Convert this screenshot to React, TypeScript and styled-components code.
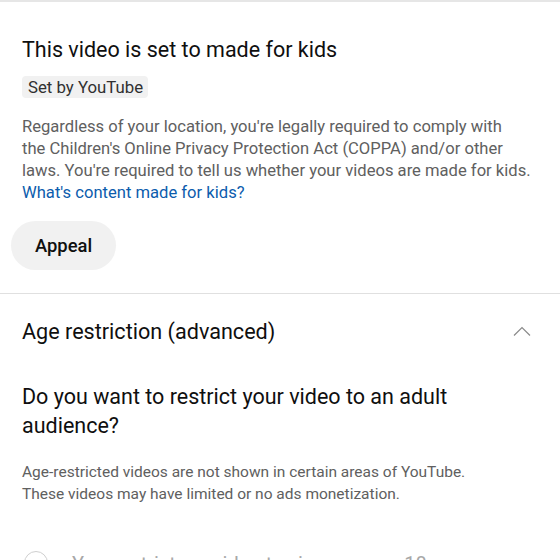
import styled, { createGlobalStyle } from 'styled-components';

const GlobalStyle = createGlobalStyle`
  html, body {
    margin: 0;
    padding: 0;
    background: #fff;
  }
  body {
    font-family: Roboto, "Noto Sans", Arial, sans-serif;
    color: #0f0f0f;
    overflow: hidden;
  }
`;

const Page = styled.div`
  width: 560px;
  height: 560px;
  overflow: hidden;
  border-top: 2px solid #e6e6e6;
  box-sizing: border-box;
`;

const Section = styled.section`
  padding: 34px 22px 23px;
  border-bottom: 1px solid #e0e0e0;
`;

const Title = styled.h2`
  margin: 0;
  font-size: 21.5px;
  font-weight: 400;
  line-height: 28px;
  color: #0f0f0f;
`;

const Chip = styled.span`
  display: inline-block;
  margin-top: 12px;
  padding: 0 5px 0 6px;
  height: 22px;
  line-height: 22px;
  font-size: 16.8px;
  color: #303030;
  background: #f1f1f1;
  border-radius: 4px;
`;

const Body = styled.p`
  margin: 18px 0 0;
  font-size: 16.6px;
  line-height: 22px;
  color: #606060;
  white-space: nowrap;
`;

const Link = styled.a`
  color: #0b5cad;
  text-decoration: none;
`;

const PillButton = styled.button`
  display: block;
  margin: 17px 0 0 -11px;
  height: 49px;
  padding: 0 24px;
  border: none;
  border-radius: 25px;
  background: #f1f1f1;
  font-family: inherit;
  font-size: 18.4px;
  font-weight: 500;
  color: #0f0f0f;
`;

const AccordionHeader = styled.div`
  display: flex;
  align-items: center;
  justify-content: space-between;
  padding: 23px 22px 0;
  height: 28px;
`;

const HeaderTitle = styled.h3`
  margin: 0;
  font-size: 21.6px;
  font-weight: 400;
  color: #0f0f0f;
`;

const Chevron = styled.svg`
  width: 18px;
  height: 10px;
  margin-right: 7px;
`;

const Content = styled.div`
  padding: 37px 22px 0;
`;

const Question = styled.h4`
  margin: 0;
  font-size: 21.5px;
  font-weight: 400;
  line-height: 29px;
  color: #0f0f0f;
`;

const Note = styled.p`
  margin: 21px 0 0;
  font-size: 15.5px;
  line-height: 22px;
  color: #606060;
`;

const RadioRow = styled.label`
  display: flex;
  align-items: flex-start;
  gap: 24px;
  margin-top: 46px;
  margin-left: 2px;
`;

const Radio = styled.span`
  width: 22px;
  height: 22px;
  border-radius: 50%;
  border: 1.5px solid #cfcfcf;
  flex-shrink: 0;
`;

const RadioText = styled.span`
  font-size: 20px;
  line-height: 24px;
  margin-top: 1px;
  color: #a8a8a8;
`;

export default function App() {
  return (
    <Page>
      <GlobalStyle />
      <Section>
        <Title>This video is set to made for kids</Title>
        <Chip>Set by YouTube</Chip>
        <Body>
          Regardless of your location, you're legally required to comply with
          <br />
          the Children's Online Privacy Protection Act (COPPA) and/or other
          <br />
          laws. You're required to tell us whether your videos are made for kids.
          <br />
          <Link href="#">What's content made for kids?</Link>
        </Body>
        <PillButton>Appeal</PillButton>
      </Section>
      <AccordionHeader>
        <HeaderTitle>Age restriction (advanced)</HeaderTitle>
        <Chevron viewBox="0 0 18 10">
          <path d="M1 9.5 L9 1.5 L17 9.5" fill="none" stroke="#8a8a8a" strokeWidth="1.2" />
        </Chevron>
      </AccordionHeader>
      <Content>
        <Question>Do you want to restrict your video to an adult audience?</Question>
        <Note>
          Age-restricted videos are not shown in certain areas of YouTube.
          <br />
          These videos may have limited or no ads monetization.
        </Note>
        <RadioRow>
          <Radio />
          <RadioText>Yes, restrict my video to viewers over 18</RadioText>
        </RadioRow>
      </Content>
    </Page>
  );
}
